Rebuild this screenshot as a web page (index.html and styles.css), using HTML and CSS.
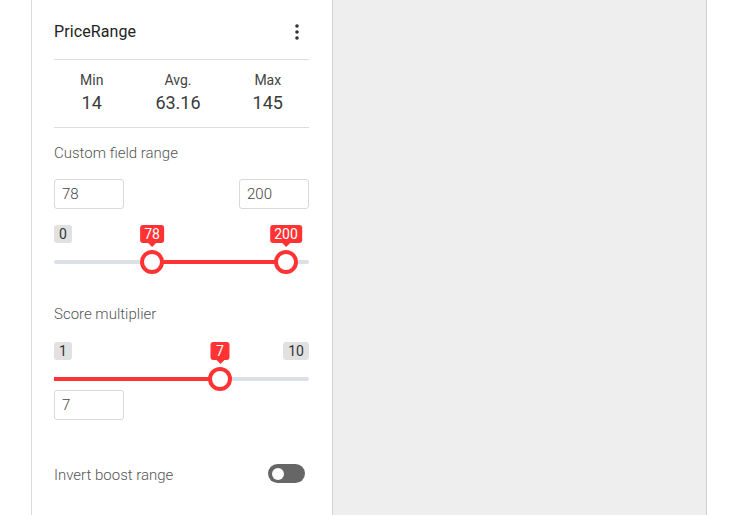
FILE: index.html
```html
<!DOCTYPE html>
<html>
<head>
<meta charset="utf-8">
<link rel="stylesheet" href="styles.css">
</head>
<body>
<div class="layout">
  <aside class="panel">
    <div class="header">
      <span class="title">PriceRange</span>
      <svg class="kebab" width="4" height="16" viewBox="0 0 4 16"><circle cx="2" cy="2" r="1.8" fill="#333"/><circle cx="2" cy="8" r="1.8" fill="#333"/><circle cx="2" cy="14" r="1.8" fill="#333"/></svg>
    </div>
    <div class="stats">
      <div class="stat"><div class="stat-label">Min</div><div class="stat-value">14</div></div>
      <div class="stat"><div class="stat-label">Avg.</div><div class="stat-value">63.16</div></div>
      <div class="stat"><div class="stat-label">Max</div><div class="stat-value">145</div></div>
    </div>

    <div class="section-label first">Custom field range</div>
    <div class="inputs">
      <input class="num" type="text" value="78">
      <input class="num" type="text" value="200">
    </div>
    <div class="slider">
      <div class="badges"><span class="badge">0</span></div>
      <div class="track">
        <div class="fill" style="left:98px;width:134px"></div>
      </div>
      <div class="tip" style="left:98px">78</div>
      <div class="thumb" style="left:98px"></div>
      <div class="tip" style="left:232px">200</div>
      <div class="thumb" style="left:232px"></div>
    </div>

    <div class="section-label second">Score multiplier</div>
    <div class="slider score">
      <div class="badges"><span class="badge">1</span><span class="badge">10</span></div>
      <div class="track">
        <div class="fill" style="left:0;width:166px"></div>
      </div>
      <div class="tip" style="left:166px">7</div>
      <div class="thumb" style="left:166px"></div>
    </div>
    <input class="num single" type="text" value="7">

    <div class="toggle-row">
      <span class="section-label plain">Invert boost range</span>
      <span class="toggle"><span class="knob"></span></span>
    </div>
  </aside>
  <main class="canvas"></main>
</div>
</body>
</html>
```

FILE: styles.css
```css
* { box-sizing: border-box; }
html, body { margin: 0; padding: 0; background: #fff; }
body { font-family: Roboto, "Noto Sans", "Liberation Sans", sans-serif; color: #333; }

.layout {
  display: flex;
  padding-left: 31px;
  height: 515px;
  overflow: hidden;
}

.panel {
  width: 302px;
  flex: none;
  border-left: 1px solid #dcdcdc;
  border-right: 1px solid #d4d4d4;
  padding: 0 23px 0 22px;
  height: 600px;
  background: #fff;
}

.canvas {
  width: 374px;
  flex: none;
  background: #eeeeee;
  border-right: 1px solid #cfcfcf;
  height: 600px;
}

.header {
  display: flex;
  justify-content: space-between;
  align-items: center;
  padding: 20px 0 15px;
  border-bottom: 1px solid #dedede;
}
.title { font-size: 16px; line-height: 24px; color: #222; letter-spacing: 0.1px; }
.kebab { margin-right: 10px; }

.stats {
  display: flex;
  justify-content: space-around;
  padding: 10px 0 12px;
  border-bottom: 1px solid #dedede;
}
.stat { text-align: center; }
.stat-label { font-size: 14px; line-height: 20px; color: #444; }
.stat-value { font-size: 18px; line-height: 24px; color: #3a3a3a; margin-top: 1px; }

.section-label {
  font-size: 15px;
  line-height: 20px;
  font-weight: 300;
  color: #555;
}
.section-label.first { margin-top: 15px; }
.section-label.second { margin-top: 29px; }

.inputs {
  display: flex;
  justify-content: space-between;
  margin-top: 16px;
}
.num {
  width: 70px;
  height: 30px;
  border: 1px solid #d9d9d9;
  border-radius: 3px;
  padding: 0 7px;
  font-family: inherit;
  font-size: 15px;
  font-weight: 300;
  color: #444;
  outline: none;
  background: #fff;
}
.num.single { display: block; margin-top: -2px; }

.slider {
  position: relative;
  height: 50px;
  margin-top: 16px;
}
.slider.score { margin-top: 18px; }

.badges {
  display: flex;
  justify-content: space-between;
}
.badge {
  display: inline-block;
  height: 18px;
  line-height: 18px;
  padding: 0 5px;
  min-width: 17px;
  text-align: center;
  border-radius: 3px;
  background: #e1e1e1;
  color: #333;
  font-size: 14px;
}

.track {
  position: absolute;
  left: 0;
  right: 0;
  top: 35px;
  height: 4px;
  border-radius: 2px;
  background: #dbe1e8;
}
.fill {
  position: absolute;
  top: 0;
  height: 4px;
  background: #ff3333;
}

.thumb {
  position: absolute;
  top: 25px;
  width: 24px;
  height: 24px;
  margin-left: -12px;
  border-radius: 50%;
  background: #fff;
  border: 4px solid #ff3333;
}

.tip {
  position: absolute;
  top: 0;
  height: 18px;
  line-height: 18px;
  padding: 0 4px;
  min-width: 19px;
  text-align: center;
  transform: translateX(-50%);
  background: #ff3333;
  color: #fff;
  font-size: 14px;
  border-radius: 3px;
}
.tip::after {
  content: "";
  position: absolute;
  left: 50%;
  bottom: -4px;
  margin-left: -4px;
  border-left: 4px solid transparent;
  border-right: 4px solid transparent;
  border-top: 4px solid #ff3333;
}

.toggle-row {
  display: flex;
  justify-content: space-between;
  align-items: center;
  margin-top: 45px;
  padding-right: 4px;
}
.toggle {
  display: flex;
  align-items: center;
  width: 37px;
  height: 19px;
  border-radius: 10px;
  background: #666;
  padding-left: 4px;
  margin-top: -3px;
}
.knob {
  width: 12px;
  height: 12px;
  border-radius: 50%;
  background: #fff;
}
```
